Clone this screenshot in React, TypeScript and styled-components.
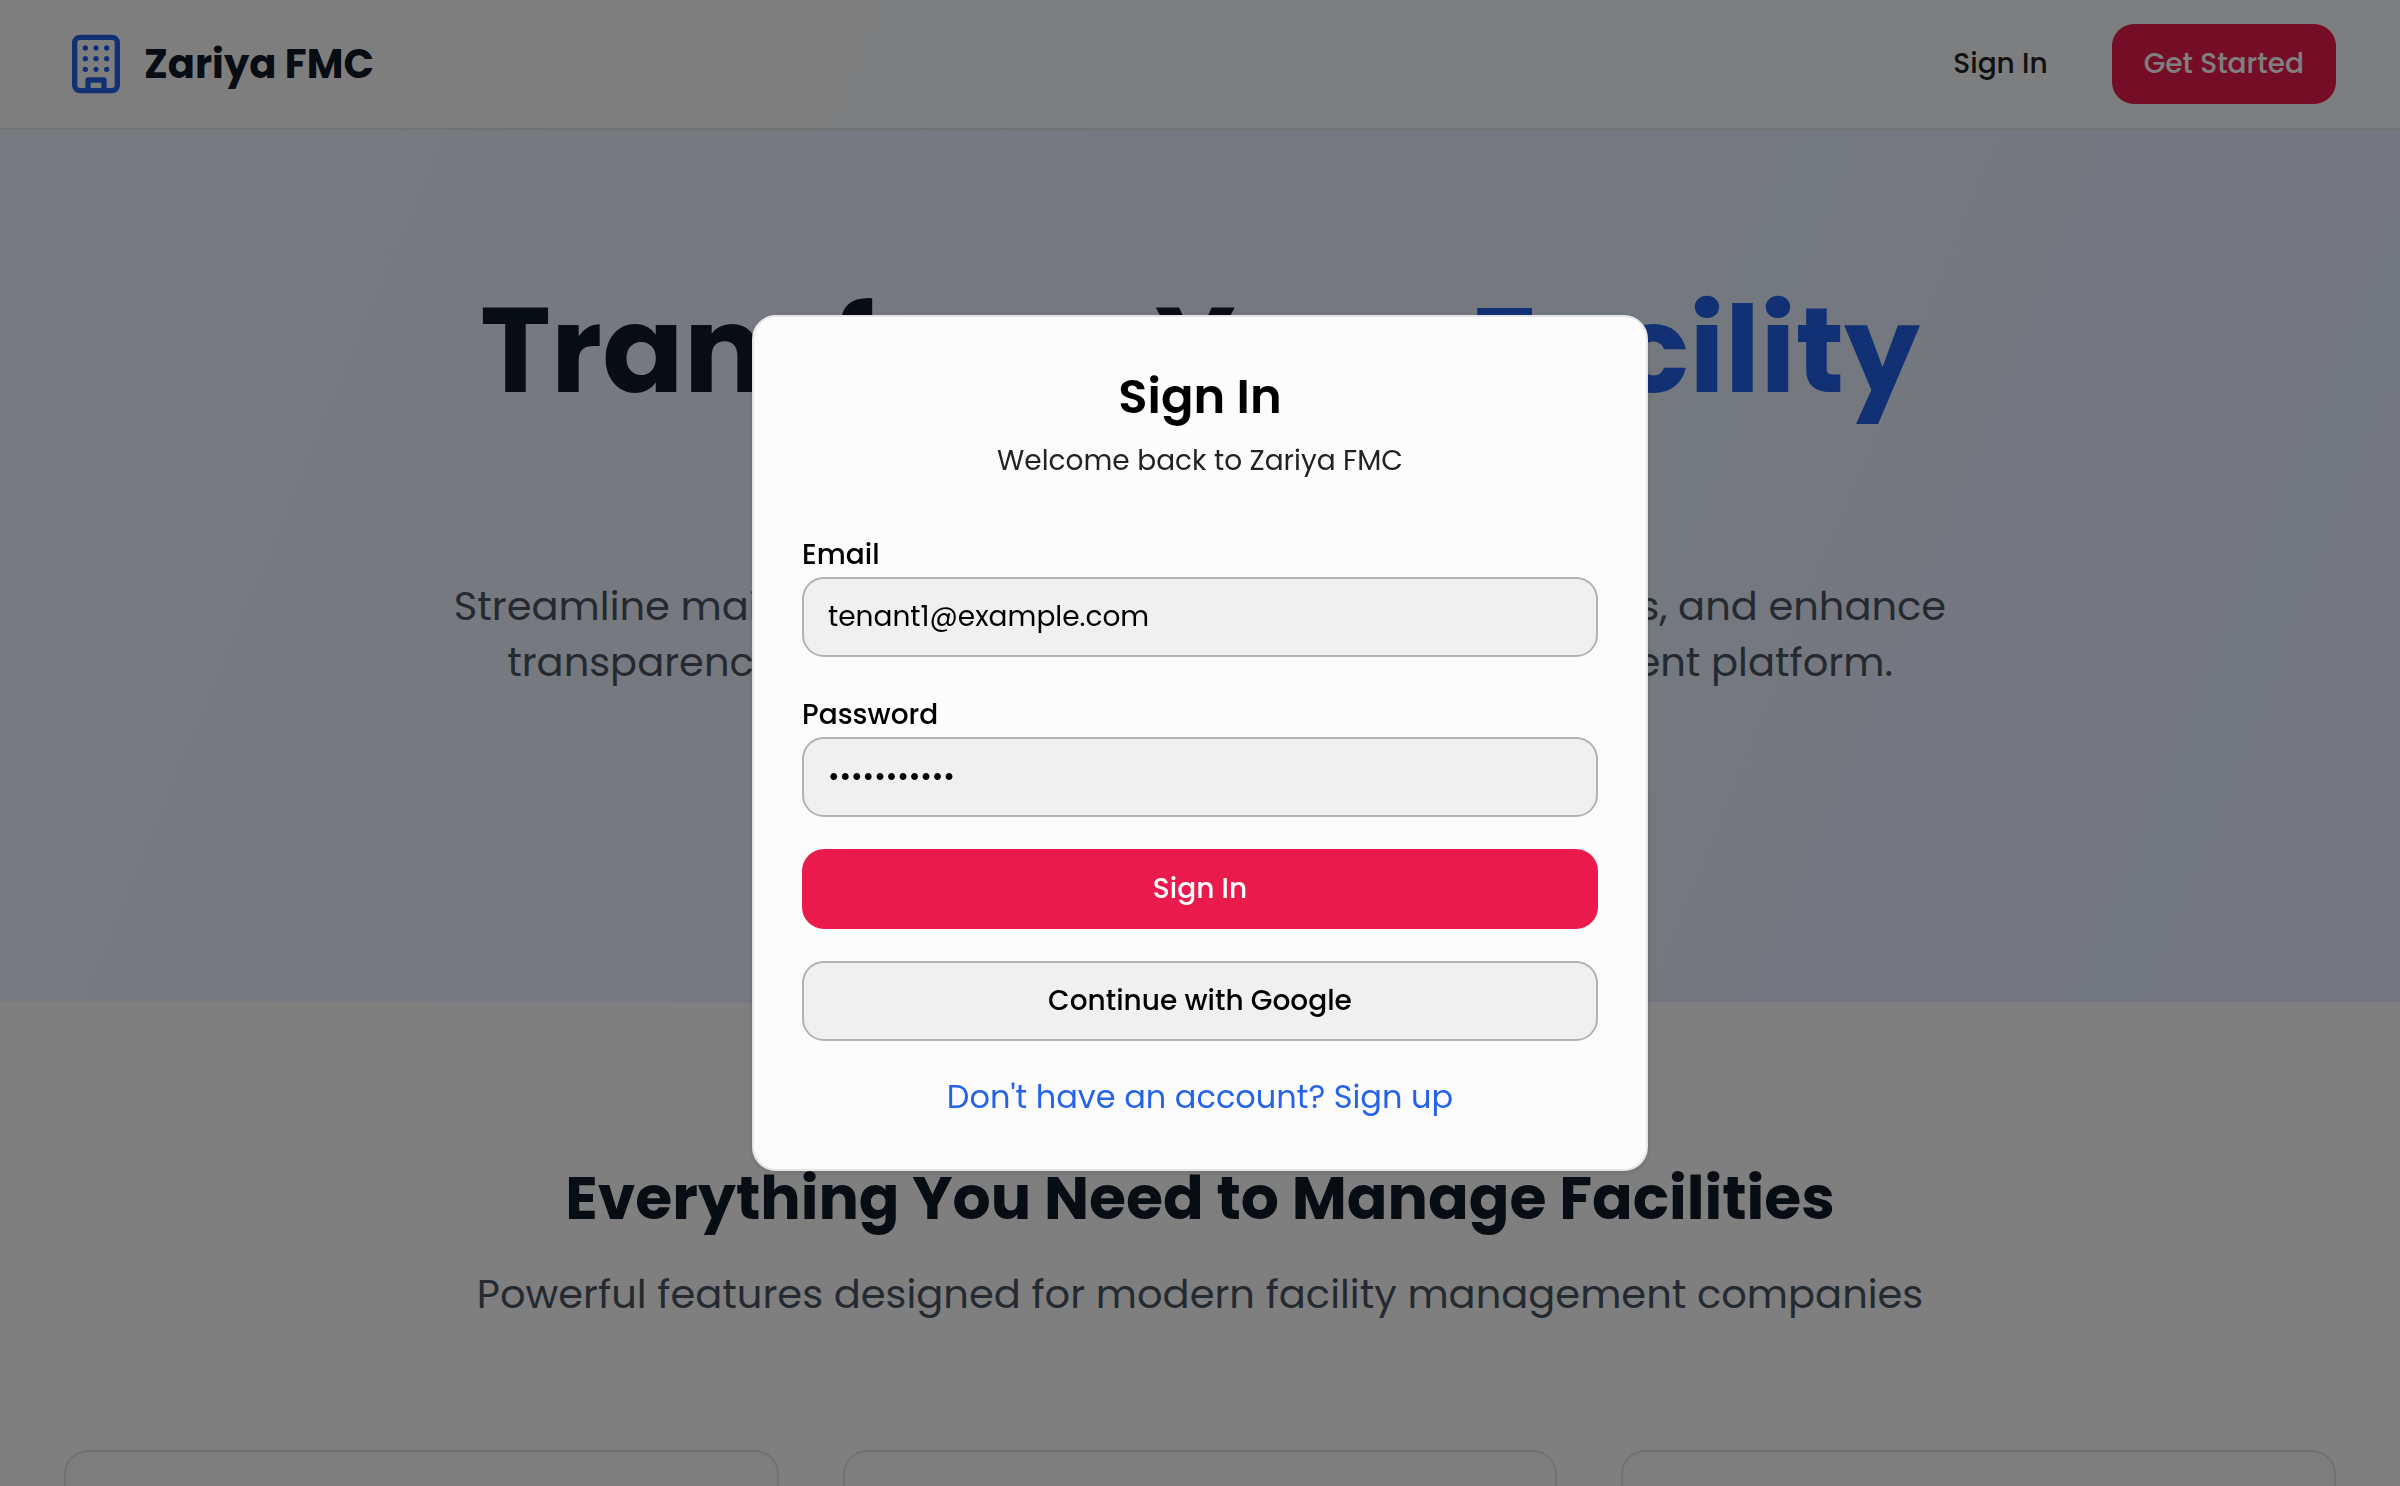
import React, { useState } from "react";
import styled, { createGlobalStyle, css } from "styled-components";

const GlobalStyle = createGlobalStyle`
  *, *::before, *::after { box-sizing: border-box; }
  html, body { height: 100%; }
  body {
    margin: 0;
    overflow: hidden;
    background: #ffffff;
    color: #000000;
    font-family: Poppins, Inter, "Open Sans", sans-serif;
    font-size: 32px;
    line-height: 48px;
  }
  #root { height: 100%; }
  h1, h2, p { margin: 0; }
  button, input { font-family: inherit; margin: 0; }
`;

const Page = styled.div`
  display: flex;
  flex-direction: column;
  height: 100%;
  overflow: hidden;
  background: linear-gradient(to bottom right, #eff6ff, #e0e7ff) top / 100% 5800px no-repeat;
`;

const Header = styled.header`
  display: flex;
  flex-shrink: 0;
  align-items: center;
  justify-content: space-between;
  padding: 24px 64px;
  border-bottom: 2px solid #e5e5e5;
  background: rgba(255, 255, 255, 0.8);
`;

const Brand = styled.div`
  display: flex;
  align-items: center;
  gap: 16px;
  color: #111827;
  font-size: 40px;
  font-weight: 700;
  line-height: 56px;
`;

const Mark = styled.svg`
  width: 64px;
  height: 64px;
  color: #2563eb;
`;

const Nav = styled.nav`
  display: flex;
  gap: 32px;
`;

type Variant = "ghost" | "primary" | "outline";

const variants = {
  ghost: css`
    background: transparent;
    border: 0;
    color: #222222;
  `,
  primary: css`
    background: #eb1a4c;
    border: 0;
    color: #ffffff;
  `,
  outline: css`
    background: #f0f0f0;
    border: 2px solid #b3b3b3;
    color: #000000;
  `,
};

const Button = styled.button<{ $variant: Variant; $wide?: boolean }>`
  height: 80px;
  padding: 0 32px;
  width: ${(p) => (p.$wide ? "100%" : "auto")};
  border-radius: 22px;
  font-size: 28px;
  font-weight: 500;
  line-height: 40px;
  cursor: pointer;
  ${(p) => variants[p.$variant]}
`;

const Hero = styled.section`
  display: flex;
  flex-direction: column;
  flex-shrink: 0;
  align-items: center;
  gap: 168px;
  padding: 160px 64px 312px;
  text-align: center;
`;

const HeroTitle = styled.h1`
  color: #111827;
  font-size: 120px;
  font-weight: 700;
  line-height: 120px;
`;

const Accent = styled.span`
  color: #2563eb;
`;

const Lead = styled.p`
  color: #4b5563;
  font-size: 40px;
  line-height: 56px;
`;

const Features = styled.section`
  display: flex;
  flex: 1;
  flex-direction: column;
  padding: 160px 64px 0;
  background: #ffffff;
  text-align: center;
`;

const SectionTitle = styled.h2`
  margin-bottom: 32px;
  color: #111827;
  font-size: 60px;
  font-weight: 700;
  line-height: 72px;
`;

const Cards = styled.div`
  display: grid;
  flex: 1;
  grid-template-columns: repeat(3, 1fr);
  gap: 64px;
  margin-top: 128px;
`;

const Card = styled.article`
  border: 2px solid #e5e5e5;
  border-bottom: 0;
  border-radius: 24px 24px 0 0;
  background: #fcfcfc;
`;

const Overlay = styled.div`
  position: fixed;
  inset: 0;
  display: flex;
  align-items: center;
  justify-content: center;
  background: rgba(0, 0, 0, 0.5);
`;

const Dialog = styled.div`
  display: flex;
  flex-direction: column;
  gap: 48px;
  width: 100%;
  max-width: 896px;
  padding: 48px;
  border: 2px solid #e5e5e5;
  border-radius: 24px;
  background: #fcfcfc;
  box-shadow: 0 2px 6px rgba(0, 0, 0, 0.12);
`;

const DialogHead = styled.div`
  display: flex;
  flex-direction: column;
  gap: 12px;
  text-align: center;
`;

const DialogTitle = styled.h2`
  font-size: 48px;
  font-weight: 600;
  line-height: 64px;
`;

const DialogText = styled.p`
  color: #222222;
  font-size: 28px;
  line-height: 40px;
`;

const Form = styled.form`
  display: flex;
  flex-direction: column;
  gap: 32px;
`;

const Field = styled.div`
  display: flex;
  flex-direction: column;
`;

const Label = styled.label`
  padding-top: 4px;
  font-size: 28px;
  font-weight: 500;
  line-height: 44px;
`;

const Input = styled.input`
  width: 100%;
  height: 80px;
  padding: 0 24px;
  border: 2px solid #b3b3b3;
  border-radius: 22px;
  outline: none;
  background: #f0f0f0;
  color: #000000;
  font-size: 28px;
  line-height: 40px;
`;

const SwitchMode = styled.a`
  color: #2563eb;
  font-size: 32px;
  line-height: 48px;
  text-align: center;
  text-decoration: none;
`;

function BuildingMark() {
  return (
    <Mark
      viewBox="0 0 24 24"
      fill="none"
      stroke="currentColor"
      strokeWidth="2"
      strokeLinecap="round"
      strokeLinejoin="round"
      aria-hidden="true"
    >
      <rect width="16" height="20" x="4" y="2" rx="2" />
      <path d="M9 22v-4h6v4" />
      <path d="M8 6h.01M12 6h.01M16 6h.01M8 10h.01M12 10h.01M16 10h.01M8 14h.01M12 14h.01M16 14h.01" />
    </Mark>
  );
}

function SignInDialog() {
  const [email, setEmail] = useState("tenant1@example.com");
  const [password, setPassword] = useState("password123");
  return (
    <Overlay>
      <Dialog role="dialog" aria-modal="true" aria-labelledby="dialog-title">
        <DialogHead>
          <DialogTitle id="dialog-title">Sign In</DialogTitle>
          <DialogText>Welcome back to Zariya FMC</DialogText>
        </DialogHead>
        <Form onSubmit={(e) => e.preventDefault()}>
          <Field>
            <Label htmlFor="email">Email</Label>
            <Input id="email" type="email" value={email} onChange={(e) => setEmail(e.target.value)} />
          </Field>
          <Field>
            <Label htmlFor="password">Password</Label>
            <Input
              id="password"
              type="password"
              value={password}
              onChange={(e) => setPassword(e.target.value)}
            />
          </Field>
          <Button type="submit" $variant="primary" $wide>
            Sign In
          </Button>
          <Button type="button" $variant="outline" $wide>
            Continue with Google
          </Button>
          <SwitchMode href="#signup">Don't have an account? Sign up</SwitchMode>
        </Form>
      </Dialog>
    </Overlay>
  );
}

export default function App() {
  return (
    <>
      <GlobalStyle />
      <Page>
        <Header>
          <Brand>
            <BuildingMark />
            Zariya FMC
          </Brand>
          <Nav>
            <Button $variant="ghost">Sign In</Button>
            <Button $variant="primary">Get Started</Button>
          </Nav>
        </Header>
        <Hero>
          <HeroTitle>
            Transform Your <Accent>Facility</Accent>
          </HeroTitle>
          <Lead>
            Streamline maintenance requests, manage service partners, and enhance
            <br />
            transparency with our comprehensive facility management platform.
          </Lead>
        </Hero>
        <Features>
          <SectionTitle>Everything You Need to Manage Facilities</SectionTitle>
          <Lead>Powerful features designed for modern facility management companies</Lead>
          <Cards>
            <Card />
            <Card />
            <Card />
          </Cards>
        </Features>
      </Page>
      <SignInDialog />
    </>
  );
}
